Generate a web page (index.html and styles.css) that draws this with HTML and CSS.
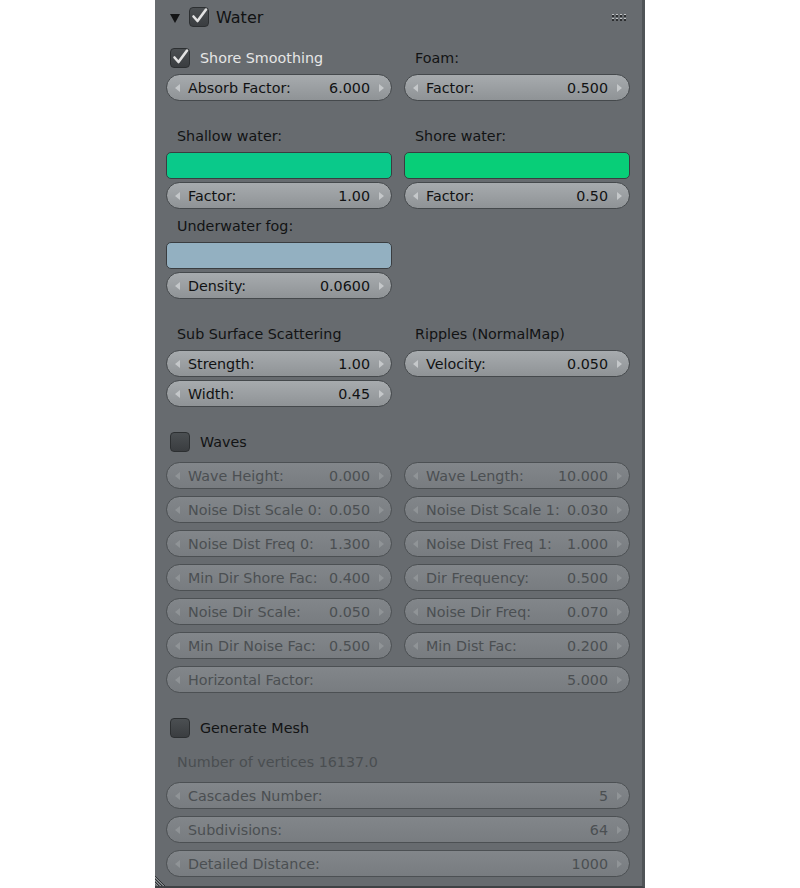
FILE: index.html
```html
<!DOCTYPE html>
<html>
<head>
<meta charset="utf-8">
<link rel="stylesheet" href="styles.css">
</head>
<body>
<div class="panel">
  <div class="header">
    <svg class="tri" width="10" height="10" viewBox="0 0 10 10"><polygon points="0,1 10,1 5,10" fill="#141516"/></svg>
    <span class="cb"><svg width="20" height="20" viewBox="0 0 20 20"><path d="M4.5 9.5 L8.5 14 L17 2.5" fill="none" stroke="#e2e2e2" stroke-width="2.6" stroke-linecap="round" stroke-linejoin="round"/></svg></span>
    <span class="title">Water</span>
    <svg class="grip" width="16" height="8" viewBox="0 0 16 8">
      <g fill="#bfc2c4"><rect x="0" y="0" width="2" height="1"/><rect x="4" y="0" width="2" height="1"/><rect x="8" y="0" width="2" height="1"/><rect x="12" y="0" width="2" height="1"/><rect x="0" y="4" width="2" height="1"/><rect x="4" y="4" width="2" height="1"/><rect x="8" y="4" width="2" height="1"/><rect x="12" y="4" width="2" height="1"/></g>
      <g fill="#2c2e30"><rect x="0" y="1" width="2" height="2"/><rect x="4" y="1" width="2" height="2"/><rect x="8" y="1" width="2" height="2"/><rect x="12" y="1" width="2" height="2"/><rect x="0" y="5" width="2" height="2"/><rect x="4" y="5" width="2" height="2"/><rect x="8" y="5" width="2" height="2"/><rect x="12" y="5" width="2" height="2"/></g>
    </svg>
  </div>

  <div class="cols row1">
    <div class="col">
      <div class="check-row"><span class="cb"><svg width="20" height="20" viewBox="0 0 20 20"><path d="M4.5 9.5 L8.5 14 L17 2.5" fill="none" stroke="#e2e2e2" stroke-width="2.6" stroke-linecap="round" stroke-linejoin="round"/></svg></span><span class="cb-label light">Shore Smoothing</span></div>
      <div class="field f-top"><span class="arr l"></span><span class="name">Absorb Factor:</span><span class="val">6.000</span><span class="arr r"></span></div>
    </div>
    <div class="col">
      <div class="label">Foam:</div>
      <div class="field f-top"><span class="arr l"></span><span class="name">Factor:</span><span class="val">0.500</span><span class="arr r"></span></div>
    </div>
  </div>

  <div class="cols row2">
    <div class="col">
      <div class="label">Shallow water:</div>
      <div class="swatch shallow"></div>
      <div class="field f-stack"><span class="arr l"></span><span class="name">Factor:</span><span class="val">1.00</span><span class="arr r"></span></div>
      <div class="label fog">Underwater fog:</div>
      <div class="swatch fogc"></div>
      <div class="field f-stack"><span class="arr l"></span><span class="name">Density:</span><span class="val">0.0600</span><span class="arr r"></span></div>
    </div>
    <div class="col">
      <div class="label">Shore water:</div>
      <div class="swatch shore"></div>
      <div class="field f-stack"><span class="arr l"></span><span class="name">Factor:</span><span class="val">0.50</span><span class="arr r"></span></div>
    </div>
  </div>

  <div class="cols row3">
    <div class="col">
      <div class="label">Sub Surface Scattering</div>
      <div class="field f-top"><span class="arr l"></span><span class="name">Strength:</span><span class="val">1.00</span><span class="arr r"></span></div>
      <div class="field f-stack"><span class="arr l"></span><span class="name">Width:</span><span class="val">0.45</span><span class="arr r"></span></div>
    </div>
    <div class="col">
      <div class="label">Ripples (NormalMap)</div>
      <div class="field f-top"><span class="arr l"></span><span class="name">Velocity:</span><span class="val">0.050</span><span class="arr r"></span></div>
    </div>
  </div>

  <div class="check-row section"><span class="cb"></span><span class="cb-label">Waves</span></div>

  <div class="grid">
    <div class="field off"><span class="arr l"></span><span class="name">Wave Height:</span><span class="val">0.000</span><span class="arr r"></span></div>
    <div class="field off"><span class="arr l"></span><span class="name">Wave Length:</span><span class="val">10.000</span><span class="arr r"></span></div>
    <div class="field off"><span class="arr l"></span><span class="name">Noise Dist Scale 0:</span><span class="val">0.050</span><span class="arr r"></span></div>
    <div class="field off"><span class="arr l"></span><span class="name">Noise Dist Scale 1:</span><span class="val">0.030</span><span class="arr r"></span></div>
    <div class="field off"><span class="arr l"></span><span class="name">Noise Dist Freq 0:</span><span class="val">1.300</span><span class="arr r"></span></div>
    <div class="field off"><span class="arr l"></span><span class="name">Noise Dist Freq 1:</span><span class="val">1.000</span><span class="arr r"></span></div>
    <div class="field off"><span class="arr l"></span><span class="name">Min Dir Shore Fac:</span><span class="val">0.400</span><span class="arr r"></span></div>
    <div class="field off"><span class="arr l"></span><span class="name">Dir Frequency:</span><span class="val">0.500</span><span class="arr r"></span></div>
    <div class="field off"><span class="arr l"></span><span class="name">Noise Dir Scale:</span><span class="val">0.050</span><span class="arr r"></span></div>
    <div class="field off"><span class="arr l"></span><span class="name">Noise Dir Freq:</span><span class="val">0.070</span><span class="arr r"></span></div>
    <div class="field off"><span class="arr l"></span><span class="name">Min Dir Noise Fac:</span><span class="val">0.500</span><span class="arr r"></span></div>
    <div class="field off"><span class="arr l"></span><span class="name">Min Dist Fac:</span><span class="val">0.200</span><span class="arr r"></span></div>
    <div class="field off wide"><span class="arr l"></span><span class="name">Horizontal Factor:</span><span class="val">5.000</span><span class="arr r"></span></div>
  </div>

  <div class="check-row section"><span class="cb"></span><span class="cb-label">Generate Mesh</span></div>
  <div class="label dim verts">Number of vertices 16137.0</div>

  <div class="stack">
    <div class="field off"><span class="arr l"></span><span class="name">Cascades Number:</span><span class="val">5</span><span class="arr r"></span></div>
    <div class="field off"><span class="arr l"></span><span class="name">Subdivisions:</span><span class="val">64</span><span class="arr r"></span></div>
    <div class="field off"><span class="arr l"></span><span class="name">Detailed Distance:</span><span class="val">1000</span><span class="arr r"></span></div>
  </div>

  <div class="scroll-thumb"></div>
  <svg class="resize" width="12" height="12" viewBox="0 0 12 12">
    <g stroke="#2f3234" stroke-width="1"><line x1="0" y1="2" x2="10" y2="12"/><line x1="0" y1="5" x2="7" y2="12"/><line x1="0" y1="8" x2="4" y2="12"/></g>
    <g stroke="#8d9194" stroke-width="1"><line x1="0" y1="3" x2="9" y2="12"/><line x1="0" y1="6" x2="6" y2="12"/><line x1="0" y1="9" x2="3" y2="12"/></g>
  </svg>
</div>
</body>
</html>
```

FILE: styles.css
```css
html, body {
  margin: 0;
  padding: 0;
  background: #ffffff;
}

body {
  font-family: "DejaVu Sans", "Liberation Sans", sans-serif;
  font-size: 14.3px;
  color: #121314;
}

.panel {
  position: relative;
  box-sizing: border-box;
  margin-left: 155px;
  width: 490px;
  height: 888px;
  background: #676b6f;
  border-right: 3px solid #505457;
  border-bottom: 2px solid #3f4245;
  padding: 0 12px 0 11px;
  overflow: hidden;
}

.header {
  height: 34px;
  display: flex;
  align-items: center;
}

.tri {
  margin-left: 4px;
  margin-top: 1px;
}

.header .cb {
  margin-left: 9px;
}

.title {
  margin-left: 7px;
  font-size: 16px;
  color: #111213;
}

.grip {
  margin-left: auto;
  margin-right: 2px;
  margin-top: 1px;
}

.cb {
  box-sizing: border-box;
  width: 20px;
  height: 20px;
  border-radius: 4px;
  border: 1px solid #2c2f31;
  background: linear-gradient(#4b4f52, #3a3d40);
  display: inline-flex;
  align-items: center;
  justify-content: center;
  flex: none;
  overflow: visible;
}

.cb svg {
  overflow: visible;
  margin: -1px;
}

.cols {
  display: grid;
  grid-template-columns: 226px 226px;
  column-gap: 12px;
}

.col {
  display: flex;
  flex-direction: column;
}

.row1 { margin-top: 12px; }
.row2 { margin-top: 23px; }
.row3 { margin-top: 23px; }

.check-row {
  height: 24px;
  display: flex;
  align-items: center;
  padding-left: 4px;
}

.cb-label {
  margin-left: 10px;
  color: #121314;
}

.cb-label.light {
  color: #e6e6e6;
}

.section { margin-top: 23px; }

.label {
  height: 24px;
  line-height: 24px;
  padding-left: 11px;
  color: #121314;
  white-space: nowrap;
}

.label.fog { margin-top: 5px; }

.label.dim {
  color: #4a4e51;
}

.verts { margin-top: 10px; }

.swatch {
  box-sizing: border-box;
  height: 27px;
  margin-top: 4px;
  border-radius: 5px;
  border: 1px solid #3a3d40;
}

.shallow { background: #0ac98a; }
.shore { background: #08ce78; }
.fogc { background: #93b0c1; }

.field {
  box-sizing: border-box;
  height: 27px;
  border-radius: 14px;
  border: 1px solid #45494c;
  background: linear-gradient(#a7abae, #8f9396);
  display: flex;
  align-items: center;
  padding: 0 7px 0 8px;
  color: #111213;
  white-space: nowrap;
}

.f-top { margin-top: 4px; }
.f-stack { margin-top: 3px; }

.name {
  flex: 1;
  margin-left: 8px;
}

.val {
  margin-right: 9px;
}

.arr {
  width: 0;
  height: 0;
  border-top: 4px solid transparent;
  border-bottom: 4px solid transparent;
  flex: none;
}

.arr.l { border-right: 5px solid #c5c8ca; }
.arr.r { border-left: 5px solid #c5c8ca; }

.field.off {
  background: linear-gradient(#82868a, #787c80);
  border-color: #4c5053;
  color: #4b4f52;
}

.field.off .arr.l { border-right-color: #909497; }
.field.off .arr.r { border-left-color: #909497; }

.grid {
  margin-top: 8px;
  display: grid;
  grid-template-columns: 226px 226px;
  column-gap: 12px;
  row-gap: 7px;
}

.wide { grid-column: 1 / span 2; }

.stack {
  margin-top: 8px;
  display: flex;
  flex-direction: column;
  gap: 7px;
}

.scroll-thumb {
  position: absolute;
  right: -3px;
  top: 403px;
  width: 2px;
  height: 420px;
  background: #94989b;
}

.resize {
  position: absolute;
  left: 0;
  bottom: 0;
}
```
